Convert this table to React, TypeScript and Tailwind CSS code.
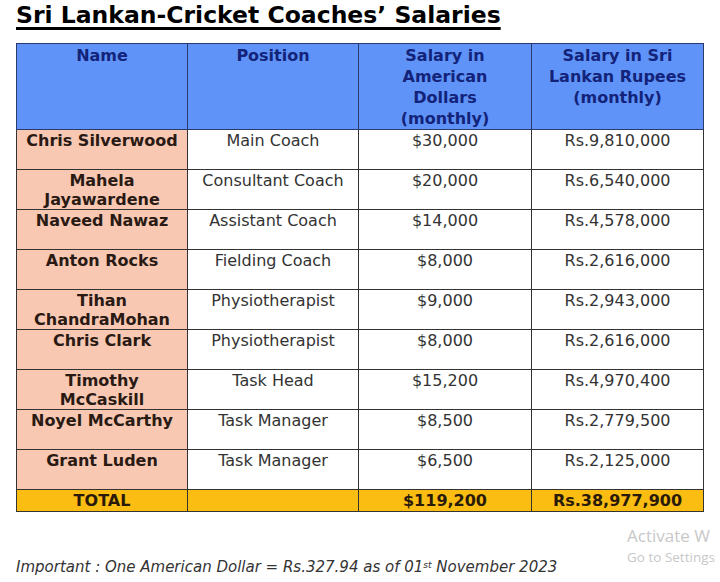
import React from 'react'

const rows = [
  { name: 'Chris Silverwood', position: 'Main Coach', usd: '$30,000', lkr: 'Rs.9,810,000' },
  { name: 'Mahela Jayawardene', position: 'Consultant Coach', usd: '$20,000', lkr: 'Rs.6,540,000' },
  { name: 'Naveed Nawaz', position: 'Assistant Coach', usd: '$14,000', lkr: 'Rs.4,578,000' },
  { name: 'Anton Rocks', position: 'Fielding Coach', usd: '$8,000', lkr: 'Rs.2,616,000' },
  { name: 'Tihan ChandraMohan', position: 'Physiotherapist', usd: '$9,000', lkr: 'Rs.2,943,000' },
  { name: 'Chris Clark', position: 'Physiotherapist', usd: '$8,000', lkr: 'Rs.2,616,000' },
  { name: 'Timothy McCaskill', position: 'Task Head', usd: '$15,200', lkr: 'Rs.4,970,400' },
  { name: 'Noyel McCarthy', position: 'Task Manager', usd: '$8,500', lkr: 'Rs.2,779,500' },
  { name: 'Grant Luden', position: 'Task Manager', usd: '$6,500', lkr: 'Rs.2,125,000' },
]

const font = "font-['DejaVu_Sans',Verdana,sans-serif]"

export default function App() {
  return (
    <div className={`relative w-[720px] h-[582px] bg-white overflow-hidden ${font}`}>
      {/* Title */}
      <div className="pl-[16px] pt-[1px] h-[43px]">
        <h1 className="text-[23.5px] font-bold leading-[28px] text-black underline decoration-[3px] underline-offset-[4px]">
          Sri Lankan-Cricket Coaches’ Salaries
        </h1>
      </div>

      {/* Table */}
      <table className="ml-[16px] w-[687px] border-collapse table-fixed">
        <colgroup>
          <col className="w-[171px]" />
          <col className="w-[171px]" />
          <col className="w-[173px]" />
          <col className="w-[172px]" />
        </colgroup>
        <thead>
          <tr className="h-[86px] bg-[#5f93f8] text-[#13237a] text-[16px] font-bold leading-[21px] align-top">
            <th className="border border-[#2a3a6a] pt-[1px]">Name</th>
            <th className="border border-[#2a3a6a] pt-[1px]">Position</th>
            <th className="border border-[#2a3a6a] pt-[1px] px-[30px]">Salary in American Dollars (monthly)</th>
            <th className="border border-[#2a3a6a] pt-[1px] px-[8px]">Salary in Sri Lankan Rupees (monthly)</th>
          </tr>
        </thead>
        <tbody>
          {rows.map((r) => (
            <tr key={r.name} className="h-[40px] align-top text-center text-[16px] leading-[19px]">
              <td className="border border-[#333] bg-[#f8c8b3] font-bold text-[#2a1a14] pt-[1px] px-[8px]">{r.name}</td>
              <td className="border border-[#333] text-[#333] pt-[1px]">{r.position}</td>
              <td className="border border-[#333] text-[#333] pt-[1px]">{r.usd}</td>
              <td className="border border-[#333] text-[#333] pt-[1px]">{r.lkr}</td>
            </tr>
          ))}
          <tr className="h-[22px] bg-[#fbbd12] text-center text-[16px] leading-[19px] font-bold text-[#2a1a0a] align-middle">
            <td className="border border-[#333]">TOTAL</td>
            <td className="border border-[#333]"></td>
            <td className="border border-[#333]">$119,200</td>
            <td className="border border-[#333]">Rs.38,977,900</td>
          </tr>
        </tbody>
      </table>

      {/* Footnote */}
      <p className="absolute left-[16px] top-[557px] text-[15px] italic text-[#333] leading-[20px]">
        Important : One American Dollar = Rs.327.94 as of 01<sup className="text-[9px]">st</sup> November 2023
      </p>

      {/* Windows watermark */}
      <div className="absolute left-[627px] top-[525px] text-[#c8c8c8] font-['Open_Sans',sans-serif] whitespace-nowrap">
        <div className="text-[17px] leading-[22px]">Activate W</div>
        <div className="text-[13.5px] leading-[20px]">Go to Settings</div>
      </div>
    </div>
  )
}
